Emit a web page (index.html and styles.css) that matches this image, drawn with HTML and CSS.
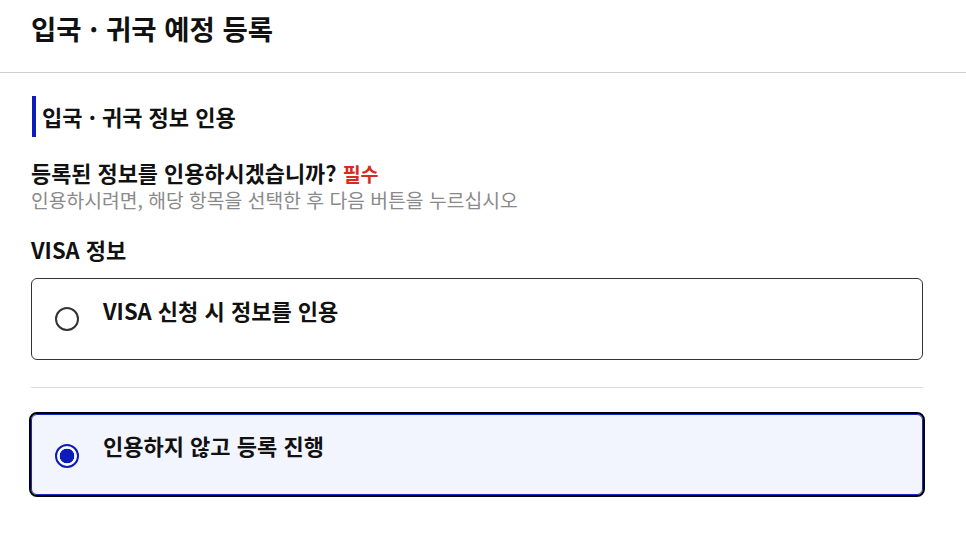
FILE: index.html
```html
<!DOCTYPE html>
<html lang="ko">
<head>
<meta charset="utf-8">
<link rel="stylesheet" href="styles.css">
</head>
<body>
<header class="page-header">
  <h1 class="page-title">입국 · 귀국 예정 등록</h1>
</header>
<main class="content">
  <h2 class="section-title">입국 · 귀국 정보 인용</h2>
  <div class="question">
    <p class="q-text">등록된 정보를 인용하시겠습니까? <span class="required">필수</span></p>
    <p class="q-help">인용하시려면, 해당 항목을 선택한 후 다음 버튼을 누르십시오</p>
  </div>
  <h3 class="group-title">VISA 정보</h3>
  <label class="option">
    <span class="radio"></span>
    <span class="option-label">VISA 신청 시 정보를 인용</span>
  </label>
  <hr class="divider">
  <label class="option option-selected">
    <span class="radio radio-on"></span>
    <span class="option-label">인용하지 않고 등록 진행</span>
  </label>
</main>
</body>
</html>
```
FILE: styles.css
```css
* { box-sizing: border-box; }
html, body { margin: 0; padding: 0; background: #fff; }
body {
  font-family: "Noto Sans CJK KR", "Noto Sans", sans-serif;
  color: #111;
  width: 966px;
  height: 554px;
  overflow: hidden;
}
.page-header {
  height: 73px;
  border-bottom: 1px solid #cfcfcf;
  padding: 8px 0 0 31px;
}
.page-title {
  margin: 0;
  font-size: 27.5px;
  line-height: 40px;
  font-weight: 700;
}
.content {
  width: 892px;
  margin-left: 31px;
  padding-top: 23px;
}
.section-title {
  margin: 0;
  height: 41px;
  border-left: 4px solid #0b1cb8;
  margin-left: 1px;
  padding-left: 6px;
  font-size: 22px;
  line-height: 41px;
  font-weight: 700;
}
.question { margin-top: 22px; }
.q-text {
  margin: 0;
  font-size: 21.9px;
  line-height: 28px;
  font-weight: 700;
}
.required {
  color: #d42d20;
  font-size: 19.5px;
}
.q-help {
  margin: 0;
  font-size: 19.3px;
  line-height: 24px;
  color: #8a8a8a;
}
.group-title {
  margin: 22px 0 0;
  font-size: 22px;
  line-height: 30px;
  font-weight: 700;
}
.option {
  display: flex;
  align-items: flex-start;
  height: 82px;
  margin-top: 14px;
  border: 1px solid #333;
  border-radius: 6px;
  padding: 19px 0 0 23px;
}
.radio {
  flex: none;
  width: 24px;
  height: 24px;
  border: 2px solid #333;
  border-radius: 50%;
  margin-top: 9px;
  background: #fff;
}
.option-label {
  margin-left: 24px;
  margin-top: -2px;
  font-size: 22px;
  line-height: 28px;
  font-weight: 700;
}
.divider {
  margin: 27px 0 0;
  border: 0;
  border-top: 1px solid #dcdcdc;
}
.option-selected {
  margin-top: 26px;
  height: 81px;
  background: #f2f5fe;
  border: 1px solid #1a2bc0;
  outline: 2px solid #000;
  border-radius: 6px;
  padding-top: 19px;
}
.option-selected .option-label { margin-top: -3px; }
.radio-on {
  border-color: #0b1cb8;
  background: radial-gradient(circle, #0b1cb8 0 7px, #fff 7.6px);
  margin-top: 10px;
}
```
